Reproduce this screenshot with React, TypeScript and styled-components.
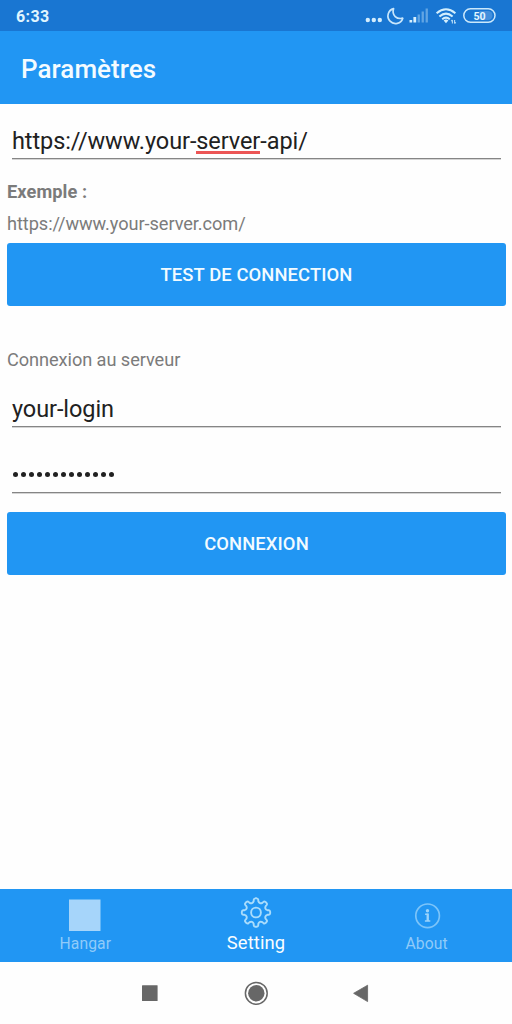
import React from "react";
import styled, { createGlobalStyle } from "styled-components";

const GlobalStyle = createGlobalStyle`
  * { box-sizing: border-box; }
  body { margin: 0; background: #fff; font-family: Roboto, "Liberation Sans", sans-serif; }
`;

const Screen = styled.div`
  width: 512px;
  height: 1024px;
  display: flex;
  flex-direction: column;
  overflow: hidden;
  background: #fefefe;
`;

const StatusBar = styled.header`
  height: 31px;
  flex: none;
  display: flex;
  align-items: center;
  justify-content: space-between;
  padding: 0 16px;
  background: #1976d2;
`;

const Clock = styled.span`
  padding-top: 2px;
  font-size: 16px;
  line-height: 31px;
  font-weight: 700;
  color: #e0f5ff;
  letter-spacing: 0.35px;
`;

const StatusIcons = styled.svg`
  display: block;
  width: 132px;
  height: 31px;
`;

const TitleBar = styled.div`
  height: 73px;
  flex: none;
  display: flex;
  align-items: center;
  padding: 2px 21px 0;
  background: #2196f3;
`;

const Title = styled.h1`
  margin: 0;
  font-size: 26px;
  line-height: 32px;
  font-weight: 500;
  color: #f4fbff;
  letter-spacing: 0.05px;
`;

const Form = styled.main`
  flex: 1;
  display: flex;
  flex-direction: column;
  padding: 0 6px 0 7px;
`;

const Field = styled.div<{ $height: number }>`
  height: ${(p) => p.$height}px;
  margin: 0 5px;
  display: flex;
  align-items: flex-end;
  padding-bottom: 3px;
  border-bottom: 1px solid #858585;
  box-shadow: 0 1px #d4d4d4;
  font-size: 23.5px;
  line-height: 28px;
  letter-spacing: -0.08px;
  color: #212121;
`;

const Misspelled = styled.span`
  height: 28px;
  box-shadow: inset 0 -1px #fefefe, inset 0 -4px #ec5555;
`;

const Password = styled.span`
  display: flex;
  gap: 3px;
  padding: 0 0 12px 1px;
`;

const Dot = styled.i`
  width: 5px;
  height: 5px;
  border-radius: 50%;
  background: #212121;
`;

const Label = styled.p<{ $top: number; $bold?: boolean }>`
  margin: ${(p) => p.$top}px 0 0;
  font-size: 18.2px;
  line-height: 22px;
  font-weight: ${(p) => (p.$bold ? 700 : 400)};
  letter-spacing: ${(p) => (p.$bold ? 0.1 : -0.07)}px;
  color: #7b7b7b;
`;

const Button = styled.button<{ $top: number }>`
  margin: ${(p) => p.$top}px 0 0;
  height: 63px;
  flex: none;
  padding: 0 0 1px;
  border: 0;
  border-radius: 3px;
  background: #2196f3;
  color: #f2fbff;
  font-family: inherit;
  font-size: 18.4px;
  font-weight: 500;
  letter-spacing: 0.1px;
`;

const TabBar = styled.nav`
  height: 73px;
  flex: none;
  display: grid;
  grid-template-columns: repeat(3, 1fr);
  background: #2196f3;
`;

const Tab = styled.div<{ $active?: boolean }>`
  display: flex;
  flex-direction: column;
  align-items: center;
  padding: 7px 0 0;
  color: ${(p) => (p.$active ? "#f8fdff" : "#90cbf9")};
  font-size: ${(p) => (p.$active ? 18.4 : 15.7)}px;
  line-height: ${(p) => (p.$active ? 22 : 24)}px;
  letter-spacing: 0.1px;

  svg {
    display: block;
    width: 40px;
    height: 36px;
  }
`;

const SystemNav = styled.footer`
  height: 62px;
  flex: none;
  display: flex;
  align-items: center;
  justify-content: center;

  svg {
    display: block;
  }
`;

const point = (radius: number, degrees: number) => {
  const a = (degrees * Math.PI) / 180;
  return `${(20 + radius * Math.cos(a)).toFixed(2)} ${(16.5 + radius * Math.sin(a)).toFixed(2)}`;
};

const gearPath =
  Array.from({ length: 8 }, (_, i) => {
    const c = i * 45;
    return `${i ? "L" : "M"}${point(11.6, c - 11.5)} L${point(13, c - 10)} Q${point(14.2, c - 8.5)} ${point(14.2, c - 3)} L${point(14.2, c + 3)} Q${point(14.2, c + 8.5)} ${point(13, c + 10)} L${point(11.6, c + 11.5)} C${point(9.9, c + 17)} ${point(9.9, c + 28)} ${point(11.6, c + 33.5)}`;
  }).join(" ") + " Z";

export default function App() {
  return (
    <>
      <GlobalStyle />
      <Screen>
        <StatusBar>
          <Clock>6:33</Clock>
          <StatusIcons viewBox="364 0 132 31" fill="none">
            <g fill="#d3ecfd">
              <circle cx="367.8" cy="20" r="2.2" />
              <circle cx="373.8" cy="20" r="2.2" />
              <circle cx="379.8" cy="20" r="2.2" />
            </g>
            <path
              d="M393.6 8.6 A7.6 7.6 0 1 0 402.8 18.2 C397 19.6 391.4 15.6 393.6 8.6 Z"
              stroke="#c8e6fb"
              strokeWidth="1.7"
              strokeLinejoin="round"
            />
            <path d="M409.5 20h2.7v2.5h-2.7zM413.4 17h2.8v5.5h-2.8z" fill="#d6effd" />
            <path d="M417.6 14.5h2.3v8h-2.3zM421.6 11.5h2.3v11h-2.3zM425.6 8.5h2.3v14h-2.3z" fill="#62a5e3" />
            <g stroke="#d3effd" strokeWidth="2">
              <path d="M436.6 13.2 Q446 5.4 455.4 13.2" />
              <path d="M439.4 16.4 Q446 10.8 452.6 16.4" />
              <path d="M442.2 19.2 Q446 16 449.8 19.2" />
            </g>
            <path d="M443.6 20.6 Q446 18.6 448.4 20.6 L446 23.2Z" fill="#d3effd" />
            <path d="M452.4 23.6v-3.6m-1.2 1.2 1.2-1.2M454.6 20v3.6m1.2-1.2-1.2 1.2" stroke="#b4dbf7" strokeWidth="1.1" />
            <rect x="463.8" y="8.8" width="31.2" height="13.4" rx="6.7" stroke="#cbe8fb" strokeWidth="1.5" />
            <path d="M479.5 11h8.5a4.5 4.5 0 0 1 0 9h-8.5z" fill="#438fdc" />
            <text
              x="473.4"
              y="19.8"
              textLength="12.2"
              lengthAdjust="spacingAndGlyphs"
              fill="#e2f6ff"
              fontFamily="Roboto, sans-serif"
              fontWeight="700"
              fontSize="11.8"
            >
              50
            </text>
          </StatusIcons>
        </StatusBar>
        <TitleBar>
          <Title>Paramètres</Title>
        </TitleBar>
        <Form>
          <Field $height={55}>
            <span>https://www.your-</span>
            <Misspelled>server</Misspelled>
            <span>-api/</span>
          </Field>
          <Label $top={22} $bold>
            Exemple :
          </Label>
          <Label $top={10}>https://www.your-server.com/</Label>
          <Button $top={8}>TEST DE CONNECTION</Button>
          <Label $top={43}>Connexion au serveur</Label>
          <Field $height={56}>your-login</Field>
          <Field $height={66}>
            <Password>
              {Array.from({ length: 13 }, (_, i) => (
                <Dot key={i} />
              ))}
            </Password>
          </Field>
          <Button $top={19}>CONNEXION</Button>
        </Form>
        <TabBar>
          <Tab>
            <svg viewBox="0 0 40 36">
              <rect x="4" y="3.5" width="31.5" height="31.5" fill="#a6d5fa" />
            </svg>
            Hangar
          </Tab>
          <Tab $active>
            <svg viewBox="0 0 40 36" fill="none" stroke="#a9dcfc" strokeWidth="1.9" strokeLinejoin="round">
              <path d={gearPath} />
              <circle cx="20" cy="16.5" r="4.9" />
            </svg>
            Setting
          </Tab>
          <Tab>
            <svg viewBox="0 0 40 36" fill="none" stroke="#7cc4f9" strokeWidth="1.7">
              <circle cx="20.6" cy="19.8" r="11.8" />
              <circle cx="20.5" cy="14.8" r="1.7" fill="#9bd3fb" stroke="none" />
              <path d="M18.1 18.3h2.6v6.6M17.9 25h5.4" stroke="#9bd3fb" strokeWidth="1.6" />
              <path d="M20.7 17.6v7.4" stroke="#9bd3fb" strokeWidth="2.2" />
            </svg>
            About
          </Tab>
        </TabBar>
        <SystemNav>
          <svg width="240" height="40" viewBox="136 973 240 40" fill="#676767">
            <rect x="142" y="985.3" width="15.6" height="15.6" rx="0.5" />
            <circle cx="256.3" cy="993.3" r="10.9" fill="none" stroke="#676767" strokeWidth="1.5" />
            <circle cx="256.3" cy="993.3" r="8.2" />
            <path d="M353.6 993.3 367.6 985.2v16.4z" stroke="#676767" strokeWidth="0.8" strokeLinejoin="round" />
          </svg>
        </SystemNav>
      </Screen>
    </>
  );
}
